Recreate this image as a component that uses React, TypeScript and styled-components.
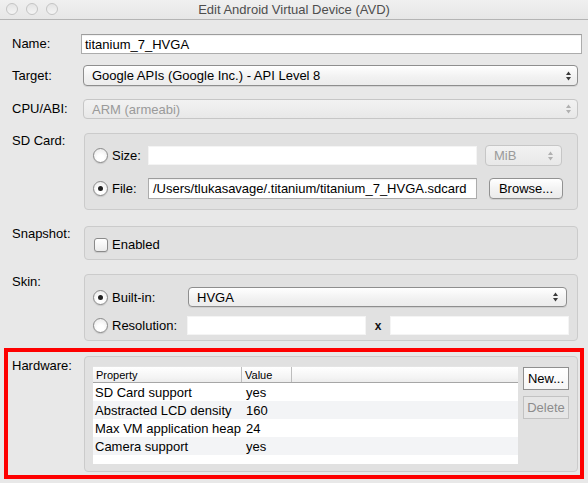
import React from "react";
import styled, { createGlobalStyle, css } from "styled-components";

const Global = createGlobalStyle`
  html, body { margin: 0; padding: 0; }
  body {
    background: #e8e8e8;
    font-family: "Liberation Sans", Arial, sans-serif;
    font-size: 13px;
    color: #000;
  }
  * { box-sizing: border-box; }
`;

const Window = styled.div`
  width: 588px;
  height: 483px;
  background: #e8e8e8;
  display: flex;
  flex-direction: column;
  overflow: hidden;
`;

const TitleBar = styled.div`
  height: 20px;
  flex: none;
  display: grid;
  grid-template-columns: 1fr auto 1fr;
  align-items: center;
  background: linear-gradient(#f0f0f0, #e6e6e6);
  border-bottom: 1px solid #b4b4b4;
`;

const Lights = styled.div`
  display: flex;
  gap: 8px;
  padding-left: 6px;
  padding-bottom: 1px;
`;

const Light = styled.span`
  width: 12px;
  height: 12px;
  border-radius: 50%;
  border: 1px solid #c4c4c4;
  background: linear-gradient(#e4e4e4, #f4f4f4);
`;

const Title = styled.div`
  color: #4e4e4e;
  font-size: 13px;
  padding-bottom: 1px;
`;

const Row = styled.div<{ $top: number; $align?: string; $pr?: number }>`
  display: flex;
  align-items: ${(p) => p.$align || "flex-start"};
  margin-top: ${(p) => p.$top}px;
  padding: 0 ${(p) => (p.$pr ?? 10)}px 0 12px;
`;

const Label = styled.div<{ $dy?: number }>`
  width: 69px;
  flex: none;
  line-height: 16px;
  margin-top: ${(p) => p.$dy ?? 0}px;
`;

const TextField = styled.div<{ $h?: number; $plain?: boolean; $pl?: number }>`
  flex: 1;
  min-width: 0;
  height: ${(p) => p.$h ?? 20}px;
  background: #fff;
  display: flex;
  align-items: center;
  padding-left: ${(p) => p.$pl ?? 3}px;
  white-space: nowrap;
  overflow: hidden;
  ${(p) =>
    p.$plain
      ? css`border: 1px solid #f4f4f4;`
      : css`
          border: 1px solid #acacac;
          border-top-color: #9c9c9c;
          box-shadow: inset 0 1px 1px rgba(0, 0, 0, 0.06);
        `}
`;

const SelectBox = styled.div<{ $disabled?: boolean; $h?: number; $w?: number; $ml?: number; $ar?: number }>`
  ${(p) => (p.$w ? css`width: ${p.$w}px; flex: none;` : css`flex: 1; min-width: 0;`)}
  margin-left: ${(p) => p.$ml ?? 2}px;
  height: ${(p) => p.$h ?? 21}px;
  border-radius: 4px;
  display: flex;
  align-items: center;
  justify-content: space-between;
  padding: 0 ${(p) => p.$ar ?? 5}px 0 8px;
  white-space: nowrap;
  ${(p) =>
    p.$disabled
      ? css`
          border: 1px solid #c6c6c6;
          background: linear-gradient(#f2f2f2, #e8e8e8);
          color: #9a9a9a;
        `
      : css`
          border: 1px solid #8e8e8e;
          background: linear-gradient(#ffffff, #f1f1f1 60%, #ececec);
          box-shadow: 0 1px 0 rgba(0, 0, 0, 0.08);
          color: #000;
        `}
`;

const Arrows = ({ disabled }: { disabled?: boolean }) => (
  <svg width="7" height="10" viewBox="0 0 7 10">
    <path d="M3.5 0.5 L6 4 L1 4 Z" fill={disabled ? "#b0b0b0" : "#3a3a3a"} />
    <path d="M1 6 L6 6 L3.5 9.5 Z" fill={disabled ? "#b0b0b0" : "#3a3a3a"} />
  </svg>
);

const Select = ({
  children,
  disabled,
  h,
  w,
  ml,
  ar,
}: {
  children: React.ReactNode;
  disabled?: boolean;
  h?: number;
  w?: number;
  ml?: number;
  ar?: number;
}) => (
  <SelectBox $disabled={disabled} $h={h} $w={w} $ml={ml} $ar={ar}>
    <span>{children}</span>
    <Arrows disabled={disabled} />
  </SelectBox>
);

const Group = styled.div<{ $pt: number; $pb: number }>`
  flex: 1;
  margin-left: 3px;
  border: 1px solid #cbcbcb;
  border-radius: 4px;
  background: #e1e1e1;
  padding: ${(p) => p.$pt}px 0 ${(p) => p.$pb}px 0;
  display: flex;
  flex-direction: column;
`;

const GroupRow = styled.div<{ $gap?: number; $pr?: number }>`
  display: flex;
  align-items: center;
  padding-left: 8px;
  padding-right: ${(p) => p.$pr ?? 0}px;
  margin-top: ${(p) => p.$gap ?? 0}px;
`;

const Radio = styled.span<{ $on?: boolean }>`
  width: 15px;
  height: 15px;
  flex: none;
  border-radius: 50%;
  border: 1px solid #8a8a8a;
  background: radial-gradient(circle at 50% 70%, #ffffff 30%, #e9e9e9 90%);
  box-shadow: 0 1px 1px rgba(0, 0, 0, 0.12);
  display: flex;
  align-items: center;
  justify-content: center;
  &::after {
    content: "";
    width: 5px;
    height: 5px;
    border-radius: 50%;
    background: #222;
    display: ${(p) => (p.$on ? "block" : "none")};
  }
`;

const OptionLabel = styled.span<{ $w: number }>`
  width: ${(p) => p.$w}px;
  flex: none;
  padding-left: 4px;
  white-space: nowrap;
`;

const Check = styled.span`
  width: 14px;
  height: 14px;
  flex: none;
  margin-left: 1px;
  border-radius: 3px;
  border: 1px solid #8a8a8a;
  background: linear-gradient(#ffffff, #ececec);
  box-shadow: 0 1px 1px rgba(0, 0, 0, 0.1);
`;

const CheckText = styled.span`
  padding-left: 4px;
`;

const RoundButton = styled.div<{ $w: number; $ml: number }>`
  width: ${(p) => p.$w}px;
  margin-left: ${(p) => p.$ml}px;
  flex: none;
  height: 21px;
  border-radius: 4px;
  border: 1px solid #929292;
  background: linear-gradient(#ffffff, #f3f3f3 50%, #ebebeb);
  box-shadow: 0 1px 0 rgba(0, 0, 0, 0.08);
  display: flex;
  align-items: center;
  justify-content: center;
  margin-top: -1px;
`;

const Times = styled.span`
  width: 24px;
  flex: none;
  text-align: center;
  font-weight: bold;
  font-size: 12px;
  color: #111;
`;

const RedBox = styled.div`
  margin: 7px 4px 0 4px;
  border: 4px solid #fe0000;
  padding: 4px 2px 3px 4px;
`;

const HwRow = styled.div`
  display: flex;
  align-items: flex-start;
`;

const HwInner = styled.div`
  display: flex;
  align-items: flex-start;
  padding: 0 8px 0 8px;
`;

const Table = styled.div`
  flex: 1;
  min-width: 0;
  height: 98px;
  background: #fff;
  display: flex;
  flex-direction: column;
  overflow: hidden;
`;

const HeadRow = styled.div`
  display: flex;
  height: 17px;
  flex: none;
  background: linear-gradient(#ffffff, #f4f4f4 70%, #ececec);
  border-top: 1px solid #e4e4e4;
  border-bottom: 1px solid #a6a6a6;
  font-size: 11px;
  align-items: center;
`;

const HeadCell = styled.div<{ $w?: number }>`
  ${(p) => (p.$w ? css`width: ${p.$w}px; flex: none;` : css`flex: 1;`)}
  height: 100%;
  display: flex;
  align-items: center;
  padding-left: 3px;
  border-right: 1px solid #bdbdbd;
  &:last-child { border-right: none; }
  background-clip: padding-box;
`;

const BodyRow = styled.div<{ $alt?: boolean }>`
  display: flex;
  height: 18px;
  flex: none;
  align-items: center;
  background: ${(p) => (p.$alt ? "#f3f4f6" : "#ffffff")};
`;

const Cell = styled.div<{ $w: number; $pl: number }>`
  width: ${(p) => p.$w}px;
  flex: none;
  padding-left: ${(p) => p.$pl}px;
  white-space: nowrap;
  overflow: hidden;
`;

const ButtonColumn = styled.div`
  width: 46px;
  flex: none;
  margin-left: 5px;
  display: flex;
  flex-direction: column;
  gap: 6px;
  padding-top: 1px;
`;

const SquareButton = styled.div<{ $disabled?: boolean }>`
  height: 23px;
  display: flex;
  align-items: center;
  justify-content: center;
  ${(p) =>
    p.$disabled
      ? css`
          border: 1px solid #c2c2c2;
          background: #e6e6e6;
          color: #8c8c8c;
        `
      : css`
          border: 1px solid #8f8f8f;
          background: linear-gradient(#ffffff, #f6f6f6);
          color: #000;
        `}
`;

const hardware = [
  ["SD Card support", "yes"],
  ["Abstracted LCD density", "160"],
  ["Max VM application heap size", "24"],
  ["Camera support", "yes"],
];

export default function App() {
  return (
    <>
      <Global />
      <Window>
        <TitleBar>
          <Lights>
            <Light />
            <Light />
            <Light />
          </Lights>
          <Title>Edit Android Virtual Device (AVD)</Title>
          <div />
        </TitleBar>

        <Row $top={14} $align="center" $pr={6}>
          <Label>Name:</Label>
          <TextField>titanium_7_HVGA</TextField>
        </Row>

        <Row $top={11} $align="center">
          <Label>Target:</Label>
          <Select>Google APIs (Google Inc.) - API Level 8</Select>
        </Row>

        <Row $top={13} $align="center">
          <Label>CPU/ABI:</Label>
          <Select disabled h={20}>ARM (armeabi)</Select>
        </Row>

        <Row $top={14}>
          <Label>SD Card:</Label>
          <Group $pt={11} $pb={10}>
            <GroupRow $pr={15}>
              <Radio />
              <OptionLabel $w={40}>Size:</OptionLabel>
              <TextField $h={19} $plain />
              <Select disabled w={77} ml={8} ar={7}>MiB</Select>
            </GroupRow>
            <GroupRow $gap={12} $pr={14}>
              <Radio $on />
              <OptionLabel $w={40}>File:</OptionLabel>
              <TextField $h={21} $pl={4}>/Users/tlukasavage/.titanium/titanium_7_HVGA.sdcard</TextField>
              <RoundButton $w={74} $ml={12}>Browse...</RoundButton>
            </GroupRow>
          </Group>
        </Row>

        <Row $top={16}>
          <Label>Snapshot:</Label>
          <Group $pt={10} $pb={7}>
            <GroupRow>
              <Check />
              <CheckText>Enabled</CheckText>
            </GroupRow>
          </Group>
        </Row>

        <Row $top={14}>
          <Label>Skin:</Label>
          <Group $pt={12} $pb={5}>
            <GroupRow $pr={10}>
              <Radio $on />
              <OptionLabel $w={79}>Built-in:</OptionLabel>
              <Select h={20} ml={1} ar={7}>HVGA</Select>
            </GroupRow>
            <GroupRow $gap={9} $pr={8}>
              <Radio />
              <OptionLabel $w={79}>Resolution:</OptionLabel>
              <TextField $h={19} $plain />
              <Times>x</Times>
              <TextField $h={19} $plain />
            </GroupRow>
          </Group>
        </Row>

        <RedBox>
          <HwRow>
            <Label $dy={2}>Hardware:</Label>
            <Group $pt={9} $pb={7}>
              <HwInner>
                <Table>
                  <HeadRow>
                    <HeadCell $w={149}>Property</HeadCell>
                    <HeadCell $w={50}>Value</HeadCell>
                    <HeadCell />
                  </HeadRow>
                  {hardware.map(([k, v], i) => (
                    <BodyRow key={k} $alt={i % 2 === 1}>
                      <Cell $w={149} $pl={2}>{k}</Cell>
                      <Cell $w={60} $pl={4}>{v}</Cell>
                    </BodyRow>
                  ))}
                </Table>
                <ButtonColumn>
                  <SquareButton>New...</SquareButton>
                  <SquareButton $disabled>Delete</SquareButton>
                </ButtonColumn>
              </HwInner>
            </Group>
          </HwRow>
        </RedBox>
      </Window>
    </>
  );
}
